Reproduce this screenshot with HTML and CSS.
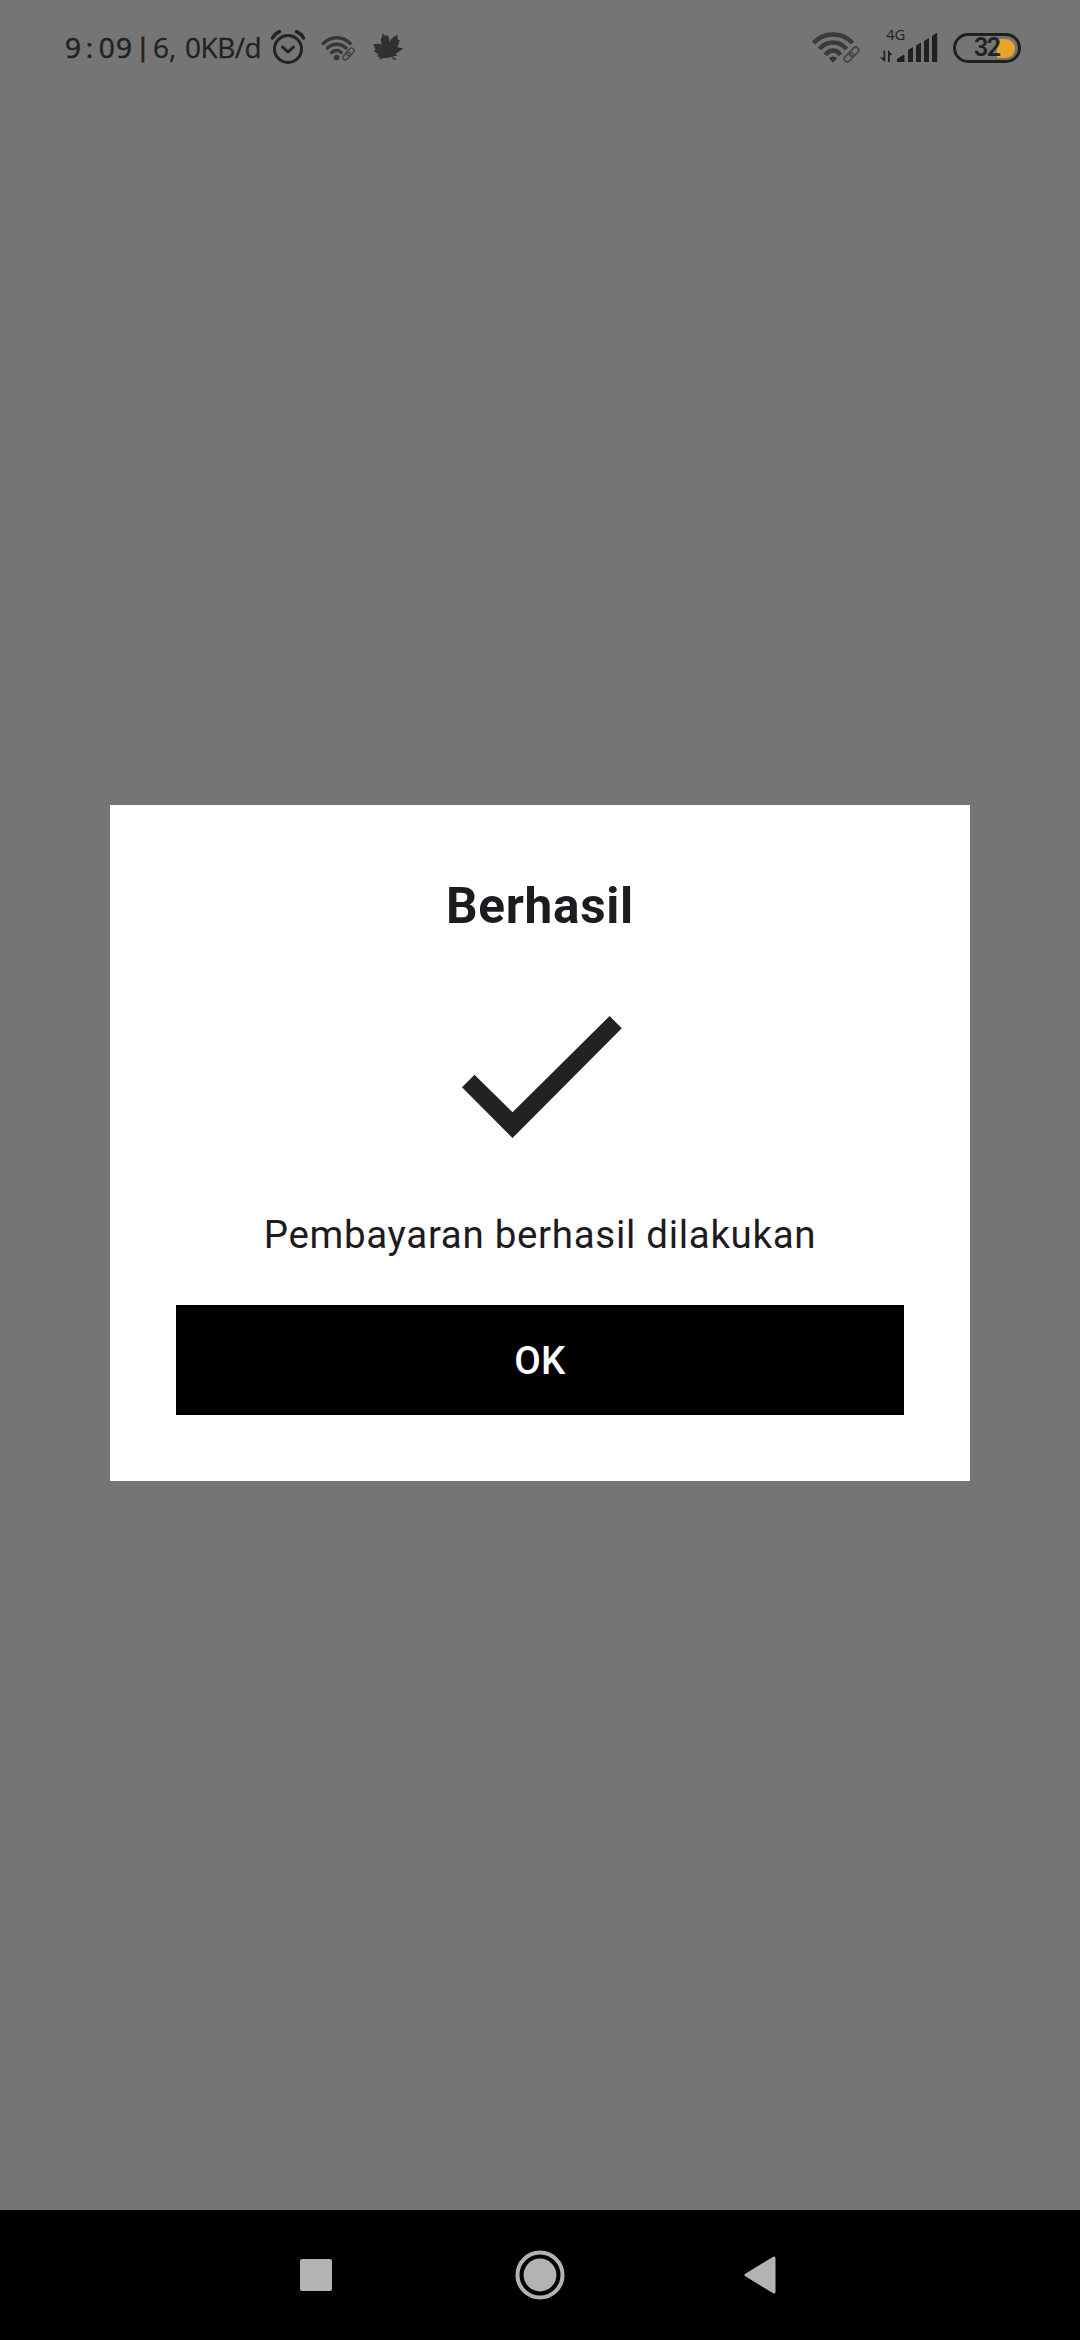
FILE: index.html
```html
<!DOCTYPE html>
<html lang="id">
<head>
<meta charset="utf-8">
<title>Berhasil</title>
<link rel="stylesheet" href="styles.css">
</head>
<body>
<div class="screen">
  <header class="status">
    <div class="status-text"><span class="clock">9<span class="colon">:</span>09</span><span class="bar">|</span><span class="six">6,</span><span class="speed">0KB/d</span></div>
    <svg class="alarm" width="36" height="38" viewBox="0 0 36 38" fill="none" stroke="#222" stroke-linecap="round">
      <circle cx="18" cy="20" r="13.5" stroke-width="3"/>
      <path d="M12.5 18l5.5 5 5.500-5" stroke-width="3" stroke-linejoin="round"/>
      <path d="M2.500 9Q5 4.500 9.500 2.700M26.500 2.700Q31.500 5 33.500 9" stroke-width="3.500"/>
    </svg>
    <svg class="wifi-small" width="34" height="26" viewBox="0 0 34 26">
      <g fill="none" stroke="#373737" stroke-width="3.400" stroke-linecap="round">
        <path d="M2.300 8.500Q8 2.700 15.700 2.700T29.200 8.500M6.500 13Q10.500 9.200 15.700 9.200T25 13M10.800 17.500Q13 15.500 15.700 15.500T20 17.300"/>
        <g stroke="#444" stroke-width="1.600" transform="rotate(-48 27.500 19)"><rect x="20.500" y="16.500" width="8.500" height="5" rx="2.500"/><rect x="26" y="16.500" width="8.500" height="5" rx="2.500"/></g>
      </g>
      <circle cx="15.700" cy="22.500" r="2.800" fill="#373737"/>
    </svg>
    <svg class="leaf" width="32" height="29" viewBox="0 0 32 29">
      <path fill="#303030" d="M10.500.3L13 2.800l3.200-.5 1 4 .6 2.700L20 5l5.300-3.300.5 4.800 2 .8-1.300 3.500-1.200 3.500 6 .9-3.500 3-4 2.300 1.700 2.300-5.500.8-3.500 1.200-4.500.3-5 1.500.7-2.500-2.500-.5 1.200-2-4.500-3.500 1.500-1.500L1.300 11l6-.3 2.500 1L8.700 6.500 10 4z"/>
      <path d="M16.500 22q3 0 4 2 1 2 3.500 2.500" fill="none" stroke="#303030" stroke-width="1.500"/>
    </svg>
    <svg class="wifi" width="48" height="31" viewBox="0 0 48 31">
      <g fill="none" stroke="#3a3a3a" stroke-width="4.300">
        <path d="M1.500 11Q9 2.500 21 2.500T40.500 11M7.500 17Q13 10.500 21 10.500T34.500 17M13.500 23Q16.500 18.500 21 18.500T28.500 23"/>
        <g stroke="#444" stroke-width="1.700" transform="rotate(-46 39.500 22.500)"><rect x="30.500" y="19.500" width="10.500" height="6" rx="3"/><rect x="38" y="19.500" width="10.500" height="6" rx="3"/></g>
      </g>
      <path d="M21 24.500q2.500 0 4 2l-4 4-4-4q1.500-2 4-2z" fill="#333"/>
    </svg>
    <div class="cell">
      <span class="net">4G</span>
      <svg class="signal" width="58" height="30" viewBox="0 0 58 30" fill="#202020">
        <path d="M3.500 17.500h1.700V29L0 24.500h3.500zM8 29V17l4.500 5h-2.700v7z"/>
        <path d="M17 29v-3l6-4q1-.5 1.500.5V29zM28 29V17l5-3v15zM36 29V12.500l5-3V29zM44 29V8l5-3v24zM52 29V3l4-2.700q1.200-.6 1.200.7v28z"/>
      </svg>
    </div>
    <div class="battery"><span class="level"></span><span class="pct">32</span></div>
  </header>
  <main class="stage">
    <section class="dialog">
      <h1 class="title">Berhasil</h1>
      <svg class="check" width="160" height="122" viewBox="0 0 160 122"><path fill="#222" d="M0 71.300L12.500 58.700 50.500 96.300 147.600 0 159.800 12.300 50.500 122z"/></svg>
      <p class="message">Pembayaran berhasil dilakukan</p>
      <button class="ok">OK</button>
    </section>
  </main>
  <nav class="nav">
    <span class="recent"></span>
    <svg width="50" height="50" viewBox="0 0 50 50"><circle cx="25" cy="25" r="22.500" fill="none" stroke="#b3b3b3" stroke-width="4"/><circle cx="25" cy="25" r="16.400" fill="#b3b3b3"/></svg>
    <svg width="32" height="38" viewBox="0 0 32 38"><path d="M2 19L30 2v34z" fill="#b3b3b3" stroke="#b3b3b3" stroke-width="3" stroke-linejoin="round"/></svg>
  </nav>
</div>
</body>
</html>
```
FILE: styles.css
```css
* { box-sizing: border-box; }
body { margin: 0; font-family: Roboto, sans-serif; }
.screen { width: 1080px; height: 2340px; background: #757575; display: flex; flex-direction: column; }
.status { height: 96px; flex: none; display: flex; align-items: flex-start; padding-left: 65px; color: #222; }
.status svg { flex: none; display: block; }
.status-text { width: 205px; margin-top: 27px; display: flex; font: 28px/40px "Open Sans", sans-serif; white-space: nowrap; }
.status-text span { flex: none; }
.clock { width: 71px; letter-spacing: 1.2px; -webkit-text-stroke: .6px #222; }
.colon { margin: 0 4.500px 0 3.500px; }
.bar { width: 17px; margin-top: -1px; font-size: 25px; -webkit-text-stroke: 1px #222; }
.six { width: 32px; -webkit-text-stroke: .3px #222; }
.speed { letter-spacing: -.5px; -webkit-text-stroke: .3px #222; }
.alarm { margin-top: 29px; }
.wifi-small { margin: 35px 0 0 15px; }
.leaf { margin: 33px 0 0 17px; }
.wifi { margin: 32px 0 0 408px; }
.cell { width: 58px; height: 36px; margin: 27px 0 0 20px; display: flex; flex-direction: column; }
.net { height: 6px; padding-left: 6px; font: 15px/14px "Open Sans", sans-serif; }
.battery { position: relative; width: 68px; height: 30px; margin: 33px 0 0 15px; border: 3.500px solid #202020; border-radius: 15px; }
.level { position: absolute; right: 3px; top: 2.500px; width: 18px; height: 19px; background: #e8a32b; border-radius: 0 9.500px 9.500px 0; }
.pct { position: absolute; left: 18px; top: 0; font: 600 25px/24px Roboto, sans-serif; letter-spacing: -1.500px; }
.stage { flex: 1; padding: 708.500px 110px 0; }
.dialog { height: 676.700px; background: #fff; padding: 66px 66px 0; display: flex; flex-direction: column; align-items: center; color: #1d1b20; }
.title { margin: 0; font-size: 49.500px; line-height: 70px; font-weight: 700; letter-spacing: .69px; }
.check { display: block; margin: 75.500px 0 0 3px; }
.message { margin: 67px 0 0; font-size: 38.500px; line-height: 60px; letter-spacing: .69px; white-space: nowrap; }
.ok { width: 728px; height: 110.400px; margin: 40px 0 0; padding: 1px 0 0; border: 0; background: #000; color: #fff; font: 500 38.500px/110px Roboto, sans-serif; letter-spacing: .28px; }
.nav { height: 130px; flex: none; background: #000; display: flex; align-items: center; padding-left: 300px; }
.nav svg { display: block; }
.recent { width: 32px; height: 32px; border-radius: 2px; background: #b3b3b3; }
.recent + svg { margin: 0 179px 0 183px; }
```
